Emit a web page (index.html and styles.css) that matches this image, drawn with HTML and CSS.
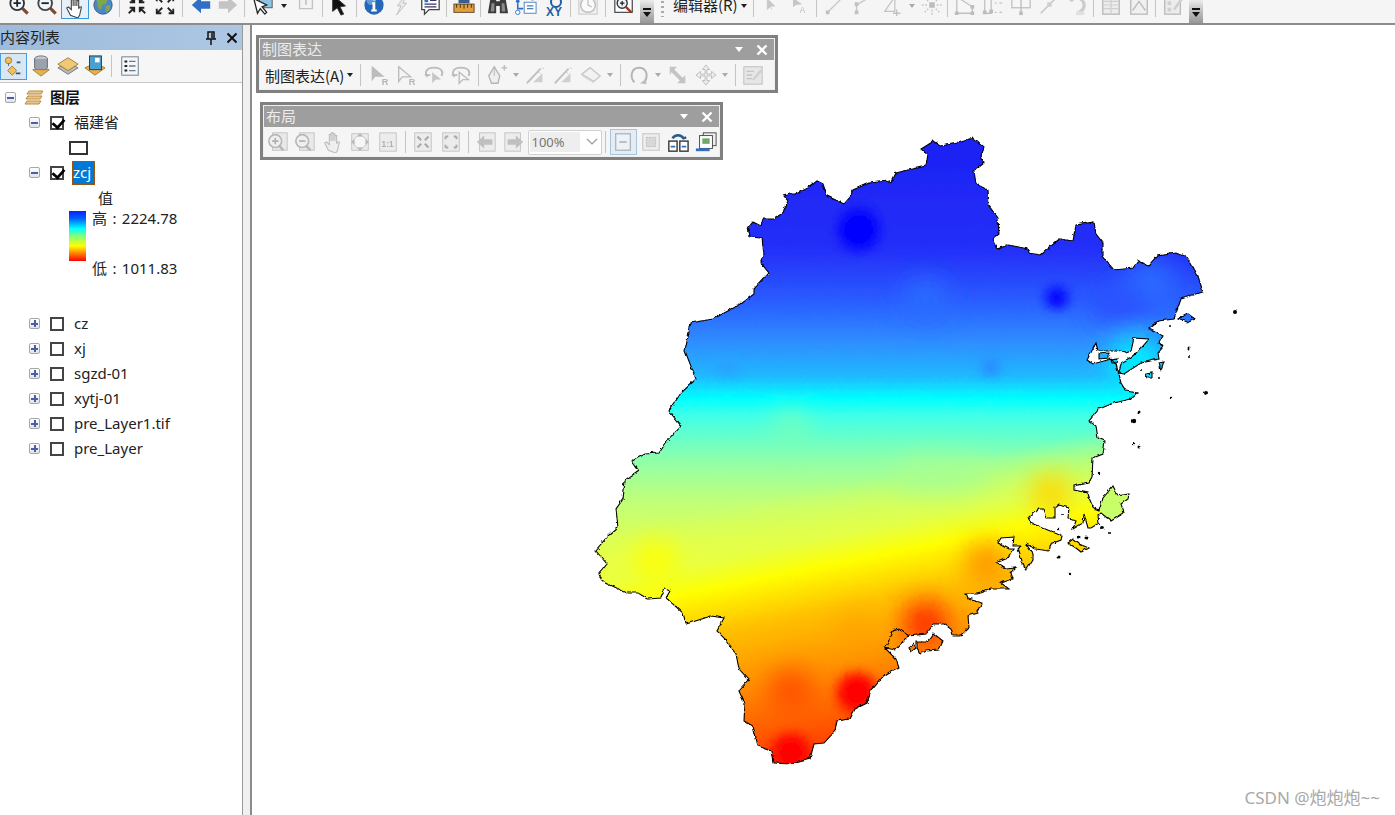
FILE: index.html
```html
<!DOCTYPE html>
<html lang="zh">
<head>
<meta charset="utf-8">
<title>ArcMap</title>
<link rel="stylesheet" href="styles.css">
</head>
<body>
<svg class="defs" width="0" height="0" aria-hidden="true">
<defs>
<symbol id="zin" viewBox="0 0 24 24"><circle cx="10" cy="10" r="7.5" fill="#eef5fb" stroke="#333" stroke-width="2"/><path d="M6 10h8M10 6v8" stroke="#222" stroke-width="2"/><path d="M15.5 15.5l6 6" stroke="#7a4a30" stroke-width="3.4"/></symbol>
<symbol id="zout" viewBox="0 0 24 24"><circle cx="10" cy="10" r="7.5" fill="#eef5fb" stroke="#444" stroke-width="2"/><path d="M6 10h8" stroke="#222" stroke-width="2"/><path d="M15.5 15.5l6 6" stroke="#7a4a30" stroke-width="3.4"/></symbol>
<symbol id="hand" viewBox="0 0 24 24"><path d="M7 21l-4-8 2-1 3 3V4h2v7-9h2v9-8h2v8-6h2v9l1-2h2l-2 9-2 3z" fill="#fff" stroke="#444" stroke-width="1.2"/></symbol>
<symbol id="globe" viewBox="0 0 24 24"><circle cx="12" cy="12" r="10" fill="#4b86c8"/><path d="M5 6l6-3 6 3-2 5-4 1-1 5-3-1-1-5zM15 13l5-1-1 6-4 2z" fill="#7ea84a"/><circle cx="12" cy="12" r="10" fill="none" stroke="#3a5f8c"/></symbol>
<symbol id="shrink" viewBox="0 0 24 24"><path d="M3 3l6 6M9 4v5H4M21 3l-6 6M15 4v5h5M3 21l6-6M9 20v-5H4M21 21l-6-6M15 20v-5h5" stroke="#222" stroke-width="2" fill="none"/></symbol>
<symbol id="grow" viewBox="0 0 24 24"><path d="M9 9L4 4M3 8V3h5M15 9l5-5M21 8V3h-5M9 15l-5 5M3 16v5h5M15 15l5 5M21 16v5h-5" stroke="#222" stroke-width="2" fill="none"/></symbol>
<symbol id="back" viewBox="0 0 24 24"><path d="M2 12l10-9v5h10v8H12v5z" fill="#2f6fc6"/></symbol>
<symbol id="fwd" viewBox="0 0 24 24"><path d="M22 12L12 3v5H2v8h10v5z" fill="#c4c4c4"/></symbol>
<symbol id="seltool" viewBox="0 0 24 24"><rect x="8" y="1" width="14" height="14" fill="#8fc4e4" stroke="#555"/><path d="M2 5l4 16 3-5 5 6 2-2-5-6 5-2z" fill="#fff" stroke="#222" stroke-width="1.4"/></symbol>
<symbol id="page" viewBox="0 0 24 24"><path d="M5 2h14v14H5z" fill="#f4f4f4" stroke="#c2c2c2" stroke-width="1.5"/><path d="M12 5v7" stroke="#c8c8c8" stroke-width="2"/></symbol>
<symbol id="cursor" viewBox="0 0 24 24"><path d="M4 1l0 18 5-4 4 8 3-1-4-8 6-1z" fill="#111" stroke="#333"/></symbol>
<symbol id="info" viewBox="0 0 24 24"><circle cx="12" cy="12" r="10.5" fill="#2468b8"/><circle cx="9" cy="7" r="5" fill="#7fb0e0" opacity=".7"/><path d="M10 9h3.4v8H15v2H9v-2h1.4v-6H10zM11 4.600h2.400v2.600H11z" fill="#fff"/></symbol>
<symbol id="bolt" viewBox="0 0 24 24"><path d="M16 1L7 13h4L6 23l11-13h-4l4-9z" fill="#ececec" stroke="#bdbdbd"/></symbol>
<symbol id="callout" viewBox="0 0 24 24"><path d="M3 3h19v14H11l-5 5v-5H3z" fill="#fff" stroke="#444" stroke-width="1.4"/><path d="M6 6h4v3H6z" fill="#2f6fc6"/><path d="M12 7h7M6 11h13M6 14h13" stroke="#336" stroke-width="1.300"/></symbol>
<symbol id="ruler" viewBox="0 0 24 24"><path d="M6 2l6 2 6-2v8H6z" fill="#3a5f8c"/><rect x="1" y="11" width="22" height="9" fill="#e0a040" stroke="#5a4020"/><path d="M4 11v4M8 11v4M12 11v5M16 11v4M20 11v4" stroke="#3a2a10"/></symbol>
<symbol id="binoc" viewBox="0 0 24 24"><path d="M4 3h6v5h4V3h6l3 18h-9v-8h-4v8H1z" fill="#3b3b3b"/><path d="M5 10h3v9H4zM16 10h3l1 9h-4z" fill="#8a8a8a"/></symbol>
<symbol id="flow" viewBox="0 0 24 24"><path d="M12 1v5M3 10v6h6M12 3h7v4" stroke="#2f6fc6" stroke-width="1.800" fill="none"/><rect x="10" y="9" width="13" height="12" fill="#fff" stroke="#4a7fb8"/><path d="M13 13h7M13 16h7" stroke="#4a7fb8" stroke-width="1.500"/><circle cx="3" cy="8" r="2" fill="#2f6fc6"/><circle cx="3" cy="20" r="2.400" fill="#fff" stroke="#2f6fc6"/></symbol>
<symbol id="clock" viewBox="0 0 24 24"><rect x="2" y="2" width="20" height="20" fill="#f0f0f0" stroke="#c4c4c4"/><circle cx="12" cy="12" r="8" fill="#fafafa" stroke="#bdbdbd" stroke-width="1.600"/><path d="M12 6v6l4 2" stroke="#c0c0c0" stroke-width="1.400" fill="none"/></symbol>
<symbol id="zdoc" viewBox="0 0 24 24"><rect x="2" y="1" width="19" height="19" fill="#fff" stroke="#444" stroke-width="1.300"/><circle cx="10" cy="10" r="5.500" fill="#eef5fb" stroke="#333" stroke-width="1.500"/><path d="M7.500 10h5M10 7.500v5" stroke="#222" stroke-width="1.400"/><path d="M14 14l6 6" stroke="#9a3a20" stroke-width="2.600"/></symbol>
<symbol id="garrow" viewBox="0 0 24 24"><path d="M7 3v15l4-4 2 4" fill="#c6c6c6" stroke="#c6c6c6"/><path d="M7 3l11 11h-7" fill="#c6c6c6"/></symbol>
<symbol id="garrowa" viewBox="0 0 24 24"><path d="M4 2v13l4-3 8-1z" fill="#c6c6c6"/><text x="13" y="23" font-size="11" font-family="Liberation Sans" fill="#bdbdbd">A</text></symbol>
<symbol id="ar" viewBox="0 0 24 24"><path d="M4 2v17l4-5h10z" fill="#bcbcbc"/><text x="15" y="23" font-size="10" font-family="Liberation Sans" font-weight="700" fill="#b5b5b5">R</text></symbol>
<symbol id="arv" viewBox="0 0 24 24"><path d="M4 3v16l4-5h9z" fill="#f4f4f4" stroke="#bcbcbc" stroke-width="1.500"/><text x="15" y="23" font-size="10" font-family="Liberation Sans" font-weight="700" fill="#b5b5b5">R</text></symbol>
<symbol id="arc" viewBox="0 0 24 24"><path d="M5 14C1 9 4 4 12 4s11 5 8 9" fill="none" stroke="#bcbcbc" stroke-width="2"/><path d="M10 9v12l4-4h6z" fill="#c6c6c6"/><path d="M2 12h6" stroke="#bcbcbc" stroke-width="2"/></symbol>
<symbol id="arcv" viewBox="0 0 24 24"><path d="M5 14C1 9 4 4 12 4s11 5 8 9" fill="none" stroke="#bcbcbc" stroke-width="2"/><path d="M10 9v12l4-4h6z" fill="#f6f6f6" stroke="#bcbcbc" stroke-width="1.500"/><path d="M2 12h6" stroke="#bcbcbc" stroke-width="2"/></symbol>
<symbol id="pen" viewBox="0 0 24 24"><path d="M9 3l6 10-2 8H6L3 13z" fill="#efefef" stroke="#b5b5b5" stroke-width="1.500"/><path d="M9 3v10" stroke="#b5b5b5"/><path d="M17 4h6M20 1v6" stroke="#c0c0c0" stroke-width="1.600"/></symbol>
<symbol id="tri1" viewBox="0 0 24 24"><path d="M2 21L17 5" stroke="#c0c0c0" stroke-width="2"/><path d="M9 20l10-10v10z" fill="#cfcfcf"/><path d="M19 4l2 2M15 9l3 3" stroke="#bbb" stroke-dasharray="2 2"/></symbol>
<symbol id="eraser" viewBox="0 0 24 24"><path d="M2 11l9-7 11 9-7 6z" fill="#f2f2f2" stroke="#c8c8c8" stroke-width="1.500"/><path d="M2 11v2l13 8v-2z" fill="#d4d4d4"/></symbol>
<symbol id="rot" viewBox="0 0 24 24"><path d="M7 20C2 15 3 4 12 4s10 10 6 15" fill="none" stroke="#b5b5b5" stroke-width="2.200"/><path d="M13 21l7-5v6z" fill="#bdbdbd"/></symbol>
<symbol id="scale" viewBox="0 0 24 24"><path d="M3 3h8l-3 3 9 9 3-3v9h-9l3-3-9-9-2 3z" fill="#c4c4c4"/></symbol>
<symbol id="move" viewBox="0 0 24 24"><path d="M12 1l4 5h-3v5h5V8l5 4-5 4v-3h-5v5h3l-4 5-4-5h3v-5H6v3l-5-4 5-4v3h5V6H8z" fill="#ececec" stroke="#bcbcbc"/></symbol>
<symbol id="notes" viewBox="0 0 24 24"><rect x="2" y="3" width="20" height="19" fill="#e6e6e6" stroke="#bdbdbd"/><path d="M5 8h8M5 12h6M5 16h6" stroke="#c4c4c4" stroke-width="1.500"/><path d="M11 17l9-11 2 2-9 10z" fill="#cfcfcf"/></symbol>
<symbol id="line1" viewBox="0 0 24 24"><path d="M4 20L20 4" stroke="#c8c8c8" stroke-width="1.500"/><path d="M2 18h4v4H2zM18 2h4v4h-4z" fill="#c0c0c0"/></symbol>
<symbol id="line2" viewBox="0 0 24 24"><path d="M5 21V12L20 3" stroke="#c8c8c8" stroke-width="1.500" fill="none"/><path d="M3 18h4v4H3zM3 9h4v4H3z" fill="#c0c0c0"/></symbol>
<symbol id="tri2" viewBox="0 0 24 24"><path d="M3 19L14 3v16z" fill="none" stroke="#c4c4c4" stroke-width="1.400"/><path d="M12 21h8M16 17v7" stroke="#c0c0c0" stroke-width="1.400"/></symbol>
<symbol id="spark" viewBox="0 0 24 24"><rect x="9" y="9" width="6" height="6" fill="#bcbcbc"/><path d="M12 1v6M12 17v6M1 12h6M17 12h6M4 4l4 4M20 4l-4 4M4 20l4-4M20 20l-4-4" stroke="#c8c8c8" stroke-dasharray="2 1.500" stroke-width="1.500"/></symbol>
<symbol id="ed1" viewBox="0 0 24 24"><path d="M3 3l17 11v7H3z" fill="#f6f6f6" stroke="#c0c0c0" stroke-width="1.400"/><path d="M1 19h4v4H1zM18 19h4v4h-4zM18 12h4v4h-4z" fill="#bcbcbc"/></symbol>
<symbol id="ed2" viewBox="0 0 24 24"><path d="M3 2v19h7V6z" fill="#f6f6f6" stroke="#c0c0c0" stroke-width="1.400"/><path d="M14 10h2M19 10h3M14 20h2M19 20h3" stroke="#c4c4c4" stroke-width="1.500"/><path d="M8 17h4v4H8zM1 18h4v4H1z" fill="#bcbcbc"/></symbol>
<symbol id="ed3" viewBox="0 0 24 24"><rect x="2" y="3" width="20" height="12" fill="#f6f6f6" stroke="#c0c0c0" stroke-width="1.400"/><path d="M12 3v18" stroke="#bcbcbc" stroke-width="1.500"/><path d="M10 19h4v4h-4z" fill="#bcbcbc"/></symbol>
<symbol id="ed4" viewBox="0 0 24 24"><path d="M3 21L21 3" stroke="#c4c4c4" stroke-width="1.500"/><path d="M10 9h5v5h-5z" fill="#d0d0d0"/></symbol>
<symbol id="ed5" viewBox="0 0 24 24"><path d="M5 8a8 8 0 1 1 9 12" fill="none" stroke="#ccc" stroke-width="3.500"/><path d="M11 19h9v4h-9z" fill="#e0e0e0"/></symbol>
<symbol id="table" viewBox="0 0 24 24"><rect x="3" y="2" width="18" height="20" fill="#ececec" stroke="#bcbcbc" stroke-width="1.500"/><path d="M3 8h18M3 12h18M3 16h18M12 4v18" stroke="#cfcfcf" stroke-width="1.300"/></symbol>
<symbol id="chart" viewBox="0 0 24 24"><rect x="3" y="2" width="18" height="20" fill="#f0f0f0" stroke="#bcbcbc" stroke-width="1.500"/><path d="M5 18l7-10 7 10" fill="none" stroke="#bcbcbc" stroke-width="1.500"/></symbol>
<symbol id="sheet" viewBox="0 0 24 24"><rect x="3" y="2" width="17" height="20" fill="#ececec" stroke="#bcbcbc" stroke-width="1.500"/><path d="M6 8h4v4H6zM6 15h4v4H6z" fill="#d0d0d0"/><path d="M12 16l9-12 2 2-9 12z" fill="#cfcfcf"/></symbol>
<symbol id="lzi" viewBox="0 0 24 24"><rect x="6" y="2" width="16" height="19" fill="#e9e9e9" stroke="#c2c2c2"/><circle cx="9" cy="11" r="7" fill="#efefef" stroke="#b8b8b8" stroke-width="1.800"/><path d="M5.500 11h7M9 7.500v7" stroke="#b0b0b0" stroke-width="1.800"/><path d="M13 16l5 5" stroke="#b5b5b5" stroke-width="2.500"/></symbol>
<symbol id="lzo" viewBox="0 0 24 24"><rect x="6" y="2" width="16" height="19" fill="#e9e9e9" stroke="#c2c2c2"/><circle cx="9" cy="11" r="7" fill="#efefef" stroke="#b8b8b8" stroke-width="1.800"/><path d="M5.500 11h7" stroke="#b0b0b0" stroke-width="1.800"/><path d="M13 16l5 5" stroke="#b5b5b5" stroke-width="2.500"/></symbol>
<symbol id="lhand" viewBox="0 0 24 24"><path d="M7 21l-4-8 2-1 3 3V4h2v7-9h2v9-8h2v8-6h2v9l1-2h2l-2 9-2 3z" fill="#efefef" stroke="#bcbcbc" stroke-width="1.200"/></symbol>
<symbol id="lfull" viewBox="0 0 24 24"><rect x="3" y="3" width="18" height="18" fill="#ececec" stroke="#c2c2c2"/><circle cx="12" cy="12" r="7" fill="#f6f6f6" stroke="#c0c0c0"/><path d="M12 2l3 4H9zM12 22l3-4H9zM2 12l4-3v6zM22 12l-4-3v6z" fill="#b8b8b8"/></symbol>
<symbol id="l11" viewBox="0 0 24 24"><rect x="3" y="2" width="18" height="20" fill="#ececec" stroke="#c2c2c2"/><text x="5" y="17" font-size="9" font-family="Liberation Sans" font-weight="700" fill="#b0b0b0">1:1</text></symbol>
<symbol id="lshr" viewBox="0 0 24 24"><rect x="3" y="2" width="18" height="20" fill="#ececec" stroke="#c2c2c2"/><path d="M6 6l4 4M14 10l4-4M6 18l4-4M14 14l4 4" stroke="#a8a8a8" stroke-width="2.200"/></symbol>
<symbol id="lgr" viewBox="0 0 24 24"><rect x="3" y="2" width="18" height="20" fill="#ececec" stroke="#c2c2c2"/><path d="M6 6h3M6 6v3M18 6h-3M18 6v3M6 18h3M6 18v-3M18 18h-3M18 18v-3" stroke="#a8a8a8" stroke-width="2"/></symbol>
<symbol id="lbk" viewBox="0 0 24 24"><rect x="5" y="2" width="17" height="20" fill="#ececec" stroke="#c2c2c2"/><path d="M2 12l8-7v4h9v6h-9v4z" fill="#c0c0c0"/></symbol>
<symbol id="lfw" viewBox="0 0 24 24"><rect x="2" y="2" width="17" height="20" fill="#ececec" stroke="#c2c2c2"/><path d="M22 12l-8-7v4H5v6h9v4z" fill="#c0c0c0"/></symbol>
<symbol id="lpg" viewBox="0 0 24 24"><rect x="4" y="3" width="16" height="18" fill="#eef2f6" stroke="#b0b8c0" stroke-width="1.500"/><path d="M8 12h8" stroke="#a0a8b0" stroke-width="1.500"/></symbol>
<symbol id="lfc" viewBox="0 0 24 24"><rect x="3" y="3" width="18" height="18" fill="#ededed" stroke="#c2c2c2"/><rect x="7" y="7" width="10" height="10" fill="#d8d8d8" stroke="#bcbcbc" stroke-dasharray="2 1"/></symbol>
<symbol id="lchg" viewBox="0 0 24 24"><path d="M6 8a7 7 0 0 1 12 0l3-1" fill="none" stroke="#2a5a8c" stroke-width="2.600"/><rect x="2" y="11" width="9" height="11" fill="#fff" stroke="#333" stroke-width="1.500"/><rect x="14" y="11" width="9" height="11" fill="#fff" stroke="#333" stroke-width="1.500"/><path d="M4 17h5M16 17h5" stroke="#2f6fc6" stroke-width="2"/></symbol>
<symbol id="ltpl" viewBox="0 0 24 24"><rect x="9" y="2" width="14" height="14" fill="#eee" stroke="#444"/><rect x="5" y="5" width="14" height="14" fill="#fff" stroke="#444"/><path d="M8 8h8v6H8z" fill="#6fa86a"/><path d="M1 19h15v3H1z" fill="#2f6fc6"/></symbol>
<symbol id="tocl" viewBox="0 0 24 24"><path d="M6 8h1M15 8h4M14 20h5" stroke="#2a5a8c" stroke-width="2"/><circle cx="6" cy="6" r="3.500" fill="#f0c060" stroke="#a07a30"/><path d="M10 12l5 5-5 5-5-5z" fill="#f0c060" stroke="#a07a30"/><path d="M6 9v3" stroke="#567"/></symbol>
<symbol id="tocd" viewBox="0 0 24 24"><ellipse cx="12" cy="4" rx="7" ry="3" fill="#c8ccd2" stroke="#667"/><path d="M5 4v10c0 3 14 3 14 0V4" fill="#9aa2ac" stroke="#667"/><path d="M3 16h18l-9 7z" fill="#e8b050" stroke="#a07a30"/></symbol>
<symbol id="tocv" viewBox="0 0 24 24"><path d="M1 14l11-6 11 6-11 7z" fill="#b8b8b8" stroke="#777"/><path d="M1 10l11-7 11 7-11 7z" fill="#f0c878" stroke="#a07a30"/></symbol>
<symbol id="tocs" viewBox="0 0 24 24"><path d="M1 14l11-5 11 5-11 8z" fill="#e8b050" stroke="#a07a30"/><rect x="6" y="1" width="13" height="15" fill="#4aa0d0" stroke="#333"/><path d="M12 3h5v5h-5z" fill="#fff"/></symbol>
<symbol id="toco" viewBox="0 0 24 24"><rect x="3" y="2" width="18" height="20" fill="#f4f6f8" stroke="#6a7a8a"/><path d="M6 7h3M6 12h3M6 17h3" stroke="#222" stroke-width="2.200"/><path d="M11 7h7M11 12h7M11 17h7" stroke="#6a7a8a" stroke-width="1.500"/></symbol>
<symbol id="layers" viewBox="0 0 20 18"><path d="M3 5l2-3h14l-2 3zM2 10l2-3h14l-2 3zM1 15l2-3h14l-2 3z" fill="#edc887" stroke="#b98a42" stroke-width="1"/></symbol>
<linearGradient id="base" gradientUnits="userSpaceOnUse" x1="0" y1="137" x2="0" y2="620">
<stop offset="0" stop-color="#1c20f4"/><stop offset=".234" stop-color="#2430f8"/><stop offset=".337" stop-color="#2a5cff"/><stop offset=".42" stop-color="#2f8cff"/><stop offset=".493" stop-color="#20b8ff"/><stop offset=".54" stop-color="#00ffff"/><stop offset=".575" stop-color="#40ffe8"/><stop offset=".669" stop-color="#90ffa8"/><stop offset=".752" stop-color="#c0ff78"/><stop offset=".876" stop-color="#e8ff48"/><stop offset="1" stop-color="#ffff20"/>
</linearGradient>
<linearGradient id="south" gradientUnits="userSpaceOnUse" x1="850" y1="480" x2="905" y2="754">
<stop offset="0" stop-color="#e8ff40" stop-opacity="0"/><stop offset=".18" stop-color="#e8ff40" stop-opacity=".75"/><stop offset=".28" stop-color="#ffff00"/><stop offset=".44" stop-color="#ffc000"/><stop offset=".64" stop-color="#ff9000"/><stop offset=".86" stop-color="#ff5000"/><stop offset="1" stop-color="#ff2800"/>
</linearGradient>
<filter id="b6" x="-100%" y="-100%" width="300%" height="300%"><feGaussianBlur stdDeviation="6"/></filter>
<filter id="b12" x="-100%" y="-100%" width="300%" height="300%"><feGaussianBlur stdDeviation="13"/></filter>
<filter id="jag" filterUnits="userSpaceOnUse" x="580" y="120" width="680" height="660"><feTurbulence type="turbulence" baseFrequency=".16" numOctaves="2" seed="4" result="n"/><feDisplacementMap in="SourceGraphic" in2="n" scale="3" xChannelSelector="R" yChannelSelector="G"/></filter>
<polygon id="fj" points="740,303 753,293 753,288 768,272 760,262 763,255 761,237 749,236 747,227 752,221 760,225 762,218 773,218 783,212 787,200 783,195 790,193 795,193 807,187 816,180 822,183 826,195 837,200 843,203 850,195 852,189 868,182 887,180 890,182 895,172 903,170 925,165 927,153 920,148 933,140 940,145 957,142 972,137 983,147 980,155 983,162 973,170 975,183 987,189 988,205 997,217 998,233 992,238 997,248 1008,244 1027,248 1028,252 1040,254 1057,239 1067,239 1072,240 1075,224 1093,221 1095,233 1102,242 1102,255 1113,269 1133,267 1138,260 1148,265 1157,255 1175,252 1187,257 1197,275 1202,291 1180,298 1173,318 1158,320 1148,328 1162,335 1158,342 1163,345 1157,352 1158,358 1140,362 1123,373 1118,372 1120,363 1130,357 1135,353 1148,338 1133,337 1130,350 1125,352 1115,350 1097,350 1095,342 1086,359 1092,363 1110,358 1115,363 1120,382 1125,390 1137,392 1130,398 1113,402 1098,408 1088,420 1095,425 1097,437 1104,440 1102,453 1092,457 1091,477 1088,482 1073,485 1073,489 1087,492 1088,497 1093,508 1098,510 1102,497 1112,485 1117,495 1128,493 1127,498 1120,503 1123,512 1110,520 1100,512 1097,515 1098,522 1090,527 1087,527 1083,513 1082,522 1072,528 1075,520 1067,517 1068,507 1058,504 1054,507 1054,517 1046,517 1043,508 1038,508 1028,517 1030,522 1042,527 1061,535 1060,539 1050,543 1048,550 1035,548 1025,543 1032,553 1032,559 1025,570 1022,563 1017,548 1020,545 1012,545 1013,536 1000,537 997,542 1008,548 1013,548 1007,557 995,562 1005,568 1015,567 1010,572 1012,578 1000,582 1008,588 990,588 980,592 976,593 965,593 967,598 982,602 977,612 967,615 968,627 960,635 952,635 950,628 943,623 933,623 925,633 908,635 905,638 895,649 884,647 895,658 898,667 887,673 881,677 870,690 866,702 854,708 849,718 836,720 834,730 823,742 813,743 809,758 791,763 773,762 771,750 757,745 752,725 743,720 744,703 738,690 748,679 738,668 735,653 726,640 716,630 723,617 710,615 685,623 682,612 665,597 669,590 664,588 660,597 647,598 637,592 626,592 601,580 598,573 606,563 595,550 608,535 617,527 615,508 622,498 624,480 638,470 631,460 644,453 658,452 665,442 680,425 668,410 680,392 695,378 684,350 690,322 712,318"/>
<polygon id="is1" points="916,641 927,641 933,633 942,640 938,649 925,650 920,653 916,647"/>
<polygon id="is2" points="1067,542 1072,538 1078,543 1088,547 1080,551 1075,547"/>
<polygon id="is3" points="1177,318 1187,313 1194,318 1186,322"/>
<polygon id="is4" points="1158,362 1163,361 1160,370"/>
<polygon id="is5" points="1145,373 1151,372 1151,377 1146,377"/>
<polygon id="is6" points="908,647 913,643 915,647 910,651"/>
<polygon id="is7" points="1098,353 1108,352 1108,357 1098,358"/>
<polygon id="is8" points="1110,359 1117,358 1116,362 1111,362"/>
<clipPath id="land"><use href="#fj"/><use href="#is1"/><use href="#is2"/><use href="#is3"/><use href="#is4"/><use href="#is5"/><use href="#is6"/><use href="#is7"/><use href="#is8"/></clipPath>
</defs>
</svg>

<div class="app">
  <header class="top">
    <span class="grip"></span>
    <span class="i"><svg class="ic"><use href="#zin"/></svg></span>
    <span class="i"><svg class="ic"><use href="#zout"/></svg></span>
    <span class="i on"><svg class="ic"><use href="#hand"/></svg></span>
    <span class="i"><svg class="ic"><use href="#globe"/></svg></span>
    <span class="sep"></span>
    <span class="i"><svg class="ic"><use href="#shrink"/></svg></span>
    <span class="i"><svg class="ic"><use href="#grow"/></svg></span>
    <span class="sep wide"></span>
    <span class="i n"><svg class="ic"><use href="#back"/></svg></span>
    <span class="i"><svg class="ic"><use href="#fwd"/></svg></span>
    <span class="sep"></span>
    <span class="i w"><svg class="ic"><use href="#seltool"/></svg></span>
    <span class="dd"></span>
    <span class="i"><svg class="ic"><use href="#page"/></svg></span>
    <span class="sep"></span>
    <span class="i"><svg class="ic"><use href="#cursor"/></svg></span>
    <span class="sep"></span>
    <span class="i"><svg class="ic"><use href="#info"/></svg></span>
    <span class="i"><svg class="ic"><use href="#bolt"/></svg></span>
    <span class="i"><svg class="ic"><use href="#callout"/></svg></span>
    <span class="sep"></span>
    <span class="i"><svg class="ic"><use href="#ruler"/></svg></span>
    <span class="sep"></span>
    <span class="i"><svg class="ic"><use href="#binoc"/></svg></span>
    <span class="i"><svg class="ic"><use href="#flow"/></svg></span>
    <span class="i xy">XY</span>
    <span class="sep"></span>
    <span class="i"><svg class="ic"><use href="#clock"/></svg></span>
    <span class="sep wide"></span>
    <span class="i"><svg class="ic"><use href="#zdoc"/></svg></span>
    <span class="over"></span>
    <span class="grip2"></span>
    <span class="menu">编辑器(R)</span>
    <span class="dd tight"></span>
    <span class="sep"></span>
    <span class="i"><svg class="ic sm"><use href="#garrow"/></svg></span>
    <span class="i"><svg class="ic sm"><use href="#garrowa"/></svg></span>
    <span class="sep wide"></span>
    <span class="i"><svg class="ic"><use href="#line1"/></svg></span>
    <span class="i"><svg class="ic"><use href="#line2"/></svg></span>
    <span class="i m2"><svg class="ic"><use href="#tri2"/></svg></span>
    <span class="dd grey tight"></span>
    <span class="i t"><svg class="ic"><use href="#spark"/></svg></span>
    <span class="sep"></span>
    <span class="i"><svg class="ic"><use href="#ed1"/></svg></span>
    <span class="i"><svg class="ic"><use href="#ed2"/></svg></span>
    <span class="i"><svg class="ic"><use href="#ed3"/></svg></span>
    <span class="i"><svg class="ic"><use href="#ed4"/></svg></span>
    <span class="i"><svg class="ic"><use href="#ed5"/></svg></span>
    <span class="sep"></span>
    <span class="i"><svg class="ic"><use href="#table"/></svg></span>
    <span class="i"><svg class="ic"><use href="#chart"/></svg></span>
    <span class="sep"></span>
    <span class="i"><svg class="ic"><use href="#sheet"/></svg></span>
    <span class="over"></span>
  </header>

  <div class="main">
    <aside class="panel">
      <div class="ptitle">
        <span class="ptext">内容列表</span>
        <svg class="pin" viewBox="0 0 12 14"><path d="M3 1h6v7H3zM1 8h10M6 8v6M7 2v5" stroke="#111" stroke-width="1.500" fill="none"/></svg>
        <svg class="pclose" viewBox="0 0 12 12"><path d="M1.500 1.500l9 9M10.500 1.500l-9 9" stroke="#111" stroke-width="2"/></svg>
      </div>
      <div class="ptools">
        <span class="pi on"><svg class="ic"><use href="#tocl"/></svg></span>
        <span class="pi"><svg class="ic"><use href="#tocd"/></svg></span>
        <span class="pi"><svg class="ic"><use href="#tocv"/></svg></span>
        <span class="pi"><svg class="ic"><use href="#tocs"/></svg></span>
        <span class="sep"></span>
        <span class="pi"><svg class="ic"><use href="#toco"/></svg></span>
      </div>
      <div class="tree">
        <div class="row root"><span class="exp minus"></span><svg class="lay"><use href="#layers"/></svg><b class="rootname">图层</b></div>
        <div class="row"><span class="exp minus"></span><span class="cb checked"></span><span class="name">福建省</span></div>
        <div class="row sym"><span class="swatch"></span></div>
        <div class="row"><span class="exp minus"></span><span class="cb checked"></span><span class="name sel">zcj</span></div>
        <div class="row val">值</div>
        <div class="legend">
          <span class="bar"></span>
          <div class="labels"><span>高 : 2224.78</span><span>低 : 1011.83</span></div>
        </div>
        <div class="row"><span class="exp plus"></span><span class="cb"></span><span class="name">cz</span></div>
        <div class="row"><span class="exp plus"></span><span class="cb"></span><span class="name">xj</span></div>
        <div class="row"><span class="exp plus"></span><span class="cb"></span><span class="name">sgzd-01</span></div>
        <div class="row"><span class="exp plus"></span><span class="cb"></span><span class="name">xytj-01</span></div>
        <div class="row"><span class="exp plus"></span><span class="cb"></span><span class="name">pre_Layer1.tif</span></div>
        <div class="row"><span class="exp plus"></span><span class="cb"></span><span class="name">pre_Layer</span></div>
      </div>
    </aside>
    <div class="gutter"></div>
    <section class="view">
      <svg class="map" viewBox="252 25 1143 790" width="1143" height="790">
        <g filter="url(#jag)">
          <g clip-path="url(#land)">
            <rect x="580" y="120" width="680" height="660" fill="url(#base)"/>
            <rect x="580" y="120" width="680" height="660" fill="url(#south)"/>
            <g filter="url(#b12)">
              <circle cx="1135" cy="362" r="26" fill="#00f0ff"/>
              <circle cx="925" cy="300" r="22" fill="#2c6cff"/>
              <circle cx="1150" cy="285" r="26" fill="#2a6cff"/>
              <ellipse cx="1120" cy="305" rx="30" ry="18" fill="#2a50ff"/>
              <ellipse cx="940" cy="475" rx="50" ry="16" fill="#a8ff90"/>
              <circle cx="790" cy="425" r="14" fill="#80ffb0"/>
              <circle cx="1050" cy="493" r="20" fill="#ffd800"/>
              <circle cx="655" cy="560" r="20" fill="#ffff00"/>
              <circle cx="985" cy="562" r="20" fill="#ff9000"/>
              <circle cx="925" cy="622" r="22" fill="#ff2800"/>
              <circle cx="855" cy="628" r="14" fill="#ffa000"/>
              <circle cx="790" cy="690" r="22" fill="#ff5000"/>
            </g>
            <g filter="url(#b6)">
              <circle cx="858" cy="229" r="21" fill="#0000ff"/>
              <circle cx="1056" cy="297" r="11" fill="#0000ff"/>
              <circle cx="990" cy="366" r="9" fill="#2a88ff"/>
              <circle cx="727" cy="365" r="10" fill="#2aa0ff"/>
              <circle cx="856" cy="692" r="20" fill="#ff0000"/>
              <circle cx="790" cy="752" r="19" fill="#ff0000"/>
            </g>
            <polygon points="1098,510 1102,497 1112,485 1117,495 1128,493 1127,498 1120,503 1123,512 1110,520 1100,512" fill="#c8ff68"/>
          </g>
          <g class="coast">
            <use href="#fj"/><use href="#is1"/><use href="#is2"/><use href="#is3"/><use href="#is4"/><use href="#is5"/><use href="#is6"/><use href="#is7"/><use href="#is8"/>
            <path d="M908 635L898 628 892 630 888 642 884 647"/>
          </g>
          <g class="specks">
            <circle cx="1234" cy="311" r="2"/><circle cx="1188" cy="348" r="1.500"/><circle cx="1188" cy="356" r="1"/><circle cx="1205" cy="392" r="2"/><circle cx="1170" cy="397" r="1.200"/><circle cx="1169" cy="325" r="1"/><circle cx="1141" cy="370" r="1"/><circle cx="1158" cy="377" r="1"/><circle cx="1138" cy="412" r="1.500"/><circle cx="1133" cy="420" r="2.200"/><circle cx="1133" cy="443" r="1.200"/><circle cx="1138" cy="446" r="1.500"/><circle cx="1069" cy="573" r="1.200"/><circle cx="1058" cy="556" r="1.500"/><circle cx="1098" cy="472" r="1.200"/><circle cx="1078" cy="536" r="1.500"/><circle cx="1086" cy="537" r="1.500"/><circle cx="1102" cy="527" r="2"/><circle cx="1109" cy="533" r="1"/><circle cx="1058" cy="528" r="1.200"/><circle cx="1062" cy="514" r="1"/>
          </g>
        </g>
      </svg>

      <div class="win win1">
        <div class="wtitle"><span class="wtext">制图表达</span><span class="wdrop"></span><svg class="wx" viewBox="0 0 12 12"><path d="M1.500 1.500l9 9M10.500 1.500l-9 9" stroke="#fff" stroke-width="2.400"/></svg></div>
        <div class="wbody first">
          <span class="wmenu">制图表达(A)</span><span class="dd fix"></span><span class="sep f"></span>
          <span class="fi"><svg class="ic"><use href="#ar"/></svg></span>
          <span class="fi"><svg class="ic"><use href="#arv"/></svg></span>
          <span class="fi"><svg class="ic"><use href="#arc"/></svg></span>
          <span class="fi"><svg class="ic"><use href="#arcv"/></svg></span>
          <span class="sep f"></span>
          <span class="fi"><svg class="ic"><use href="#pen"/></svg></span><span class="dd grey fix"></span>
          <span class="fi"><svg class="ic"><use href="#tri1"/></svg></span>
          <span class="fi"><svg class="ic"><use href="#tri1"/></svg></span>
          <span class="fi"><svg class="ic"><use href="#eraser"/></svg></span><span class="dd grey fix"></span>
          <span class="sep f"></span>
          <span class="fi"><svg class="ic"><use href="#rot"/></svg></span><span class="dd grey fix"></span>
          <span class="fi"><svg class="ic"><use href="#scale"/></svg></span>
          <span class="fi"><svg class="ic"><use href="#move"/></svg></span><span class="dd grey fix"></span>
          <span class="sep f"></span>
          <span class="fi"><svg class="ic"><use href="#notes"/></svg></span>
        </div>
      </div>

      <div class="win win2">
        <div class="wtitle"><span class="wtext">布局</span><span class="wdrop"></span><svg class="wx" viewBox="0 0 12 12"><path d="M1.500 1.500l9 9M10.500 1.500l-9 9" stroke="#fff" stroke-width="2.400"/></svg></div>
        <div class="wbody second">
          <span class="fi"><svg class="ic"><use href="#lzi"/></svg></span>
          <span class="fi"><svg class="ic"><use href="#lzo"/></svg></span>
          <span class="fi"><svg class="ic"><use href="#lhand"/></svg></span>
          <span class="fi"><svg class="ic"><use href="#lfull"/></svg></span>
          <span class="fi"><svg class="ic"><use href="#l11"/></svg></span>
          <span class="sep f"></span>
          <span class="fi"><svg class="ic"><use href="#lshr"/></svg></span>
          <span class="fi"><svg class="ic"><use href="#lgr"/></svg></span>
          <span class="sep f"></span>
          <span class="fi"><svg class="ic"><use href="#lbk"/></svg></span>
          <span class="fi"><svg class="ic"><use href="#lfw"/></svg></span>
          <span class="combo"><span class="cval">100%</span><svg class="chev" viewBox="0 0 12 8"><path d="M1 1l5 5 5-5" stroke="#999" stroke-width="1.200" fill="none"/></svg></span>
          <span class="sep f"></span>
          <span class="fi on"><svg class="ic"><use href="#lpg"/></svg></span>
          <span class="fi"><svg class="ic"><use href="#lfc"/></svg></span>
          <span class="fi"><svg class="ic"><use href="#lchg"/></svg></span>
          <span class="fi"><svg class="ic"><use href="#ltpl"/></svg></span>
        </div>
      </div>

      <div class="mark">CSDN @炮炮炮~~</div>
    </section>
  </div>
</div>
</body>
</html>
```
FILE: styles.css
```css
* { box-sizing: border-box; }
html, body { margin: 0; padding: 0; background: #fff; overflow: hidden; }
body { font-family: "Noto Sans", "Noto Sans CJK SC", sans-serif; font-size: 15px; color: #222; }
.defs { position: absolute; }
.app { width: 1395px; height: 815px; display: flex; flex-direction: column; overflow: hidden; }

.top { height: 25px; flex: none; display: flex; align-items: flex-end; padding-bottom: 6px; background: #f5f5f5; border-bottom: 2px solid #8c8c8c; overflow: hidden; font-family: "Noto Sans CJK SC", sans-serif; }
.grip { width: 5px; flex: none; }
.ic { width: 22px; height: 22px; display: block; flex: none; filter: blur(.3px); }
.ic.sm { width: 18px; height: 18px; }
.i { width: 28px; height: 24px; flex: none; display: flex; align-items: center; justify-content: center; position: relative; }
.i.n { width: 27px; }
.i.w { width: 30px; }
.i.t { width: 26px; }
.i.m2 { margin-left: 2px; }
.i.on { outline: 1px solid #3a9be0; outline-offset: -1px; background: #e6f0f8; margin: 0 0 -2px; }
.xy { font: 700 12px/14px "Liberation Sans", sans-serif; color: #1f5fa8; padding-top: 13px; }
.xy::before { content: ""; position: absolute; left: 10px; top: 3px; width: 8px; height: 8px; border: 2px solid #1f5fa8; border-radius: 50%; }
.sep { width: 6px; height: 24px; flex: none; position: relative; }
.sep::after { content: ""; position: absolute; left: 2px; top: 0; bottom: 0; width: 1px; background: #c4c4c4; }
.sep.wide { width: 8px; }
.sep.wide::after { left: 3px; }
.dd { width: 14px; height: 24px; flex: none; position: relative; }
.dd::after { content: ""; position: absolute; left: 3px; top: 11px; border: 3.500px solid transparent; border-top: 4px solid #222; border-bottom: 0; }
.dd.grey::after { border-top-color: #aaa; }
.dd.tight { width: 12px; }
.dd.tight::after { left: 2px; }
.over { width: 14px; height: 24px; flex: none; margin: 0 2px -6px; background: linear-gradient(#f0f0f0 0, #c8c8c8 40%, #989898 100%); position: relative; }
.over::before { content: ""; position: absolute; left: 3px; top: 9px; width: 8px; height: 2px; background: #111; }
.over::after { content: ""; position: absolute; left: 3px; top: 13px; border: 4px solid transparent; border-top: 5px solid #111; border-bottom: 0; }
.grip2 { width: 3px; height: 16px; flex: none; margin: 0 9px 0 5px; background: repeating-linear-gradient(#aaa 0 2px, transparent 2px 5px); }
.menu { height: 24px; line-height: 24px; flex: none; width: 66px; color: #222; font-size: 15px; white-space: nowrap; }

.main { flex: 1; display: flex; min-height: 0; }
.panel { width: 243px; flex: none; display: flex; flex-direction: column; background: #fff; border-right: 1px solid #9a9a9a; }
.ptitle { height: 25px; flex: none; display: flex; align-items: center; background: linear-gradient(90deg, #9dbbdc, #adc7e3); font-family: "Noto Sans CJK SC", sans-serif; }
.ptext { flex: 1; font-size: 15px; line-height: 22px; height: 24px; color: #222; }
.pin { width: 12px; height: 14px; margin-right: 9px; }
.pclose { width: 12px; height: 12px; margin-right: 4px; }
.ptools { height: 33px; flex: none; display: flex; align-items: center; background: #f6f6f6; border-bottom: 1px solid #c8c8c8; }
.pi { width: 27px; height: 27px; flex: none; display: flex; align-items: center; justify-content: center; }
.pi.on { background: #d9e7f3; outline: 1px solid #4a9ee0; outline-offset: -1px; }
.ptools .sep { height: 22px; width: 8px; }
.ptools .sep::after { left: 3px; }
.tree { flex: 1; padding-top: 2px; }
.row { height: 25px; display: flex; align-items: center; padding-left: 29px; color: #222; white-space: nowrap; }
.row.root { padding-left: 5px; }
.exp { width: 11px; height: 11px; flex: none; position: relative; border: 1px solid #a8a8a8; border-radius: 2px; background: linear-gradient(#fff, #dfe3ea); }
.exp::before { content: ""; position: absolute; left: 1px; right: 1px; top: 3.500px; height: 2px; background: #4a5fa8; }
.exp.plus::after { content: ""; position: absolute; top: 1px; bottom: 1px; left: 3.500px; width: 2px; background: #4a5fa8; }
.lay { width: 20px; height: 18px; margin: 0 6px 0 8px; flex: none; }
.rootname { font-family: "Noto Sans CJK SC", sans-serif; font-weight: 700; font-size: 15px; line-height: 20px; height: 22px; color: #111; }
.cb { width: 14px; height: 14px; flex: none; margin-left: 10px; border: 2px solid #444; background: #fff; position: relative; }
.cb.checked::after { content: ""; position: absolute; left: 0; top: 0; width: 10px; height: 6px; border-left: 3px solid #000; border-bottom: 3px solid #000; transform: rotate(-48deg) scale(.9); }
.name { margin-left: 10px; font-size: 15px; line-height: 20px; height: 22px; }
.name.sel { margin-left: 8px; padding: 0 1px; height: 24px; line-height: 23px; width: 23px; background: #0078d7; color: #fff; outline: 1px dotted #a05a10; outline-offset: -1px; }
.sym { padding-left: 69px; }
.swatch { width: 19px; height: 14px; border: 2px solid #333; background: #fff; }
.val { padding-left: 98px; height: 24px; font-family: "Noto Sans CJK SC", sans-serif; }
.legend { height: 102px; display: flex; padding-left: 69px; }
.bar { width: 17px; height: 50px; margin-top: 2px; flex: none; background: linear-gradient(#0a20ff 0, #0060ff 15%, #00ffff 35%, #80ff80 50%, #ffff00 70%, #ff8000 85%, #ff0000 100%); }
.labels { height: 70px; margin-left: 6px; margin-top: -1px; display: flex; flex-direction: column; justify-content: space-between; line-height: 20px; font-size: 15px; word-spacing: 1.500px; }

.gutter { width: 9px; flex: none; background: #f0f0f0; border-right: 2px solid #8c8c8c; }
.view { flex: 1; position: relative; min-width: 0; background: #fff; }
.map { display: block; }
.coast use, .coast path { fill: none; stroke: #000; stroke-width: 1.100; }
.specks circle { fill: #000; }

.win { position: absolute; height: 58px; border: 3px solid #808080; background: #f5f5f5; display: flex; flex-direction: column; box-shadow: inset 0 0 0 1px #eee; }
.win1 { left: 4px; top: 10px; width: 522px; }
.win2 { left: 8px; top: 77px; width: 463px; }
.wtitle { height: 21px; flex: none; display: flex; align-items: center; background: #9e9e9e; padding: 0 6px 0 2px; margin: 1px 1px 0; font-family: "Noto Sans CJK SC", sans-serif; }
.wtext { flex: 1; color: #ececec; font-size: 15px; line-height: 20px; height: 21px; }
.wdrop { width: 0; height: 0; margin-right: 13px; border: 4px solid transparent; border-top: 5px solid #fff; border-bottom: 0; }
.wx { width: 12px; height: 12px; }
.wbody { flex: 1; display: flex; align-items: center; min-height: 0; }
.wbody.first { padding-left: 6px; }
.wbody.second { padding-left: 1px; }
.wmenu { width: 80px; flex: none; font-family: "Noto Sans CJK SC", sans-serif; font-size: 15px; color: #222; white-space: nowrap; }
.dd.fix { width: 12px; height: 10px; }
.dd.fix::after { top: 3px; left: 2px; }
.sep.f { width: 8px; }
.sep.f::after { left: 3px; }
.wbody .sep { height: 22px; }
.fi { width: 27.500px; height: 26px; flex: none; display: flex; align-items: center; justify-content: center; }
.fi.on { background: #e4edf5; outline: 1px solid #a8c4dc; outline-offset: -1px; }
.combo { width: 74px; height: 25px; flex: none; display: flex; align-items: center; background: #fff; border: 1px solid #d0d0d0; border-radius: 2px; }
.cval { width: 50px; height: 20px; margin-left: 1px; background: #eeeeee; color: #777; font: 13px/20px "Noto Sans", sans-serif; padding-left: 2px; }
.chev { width: 12px; height: 8px; margin-left: 6px; }
.mark { position: absolute; right: 15px; bottom: 7px; color: #a8a8a8; font-size: 17px; line-height: 20px; white-space: nowrap; }
```
